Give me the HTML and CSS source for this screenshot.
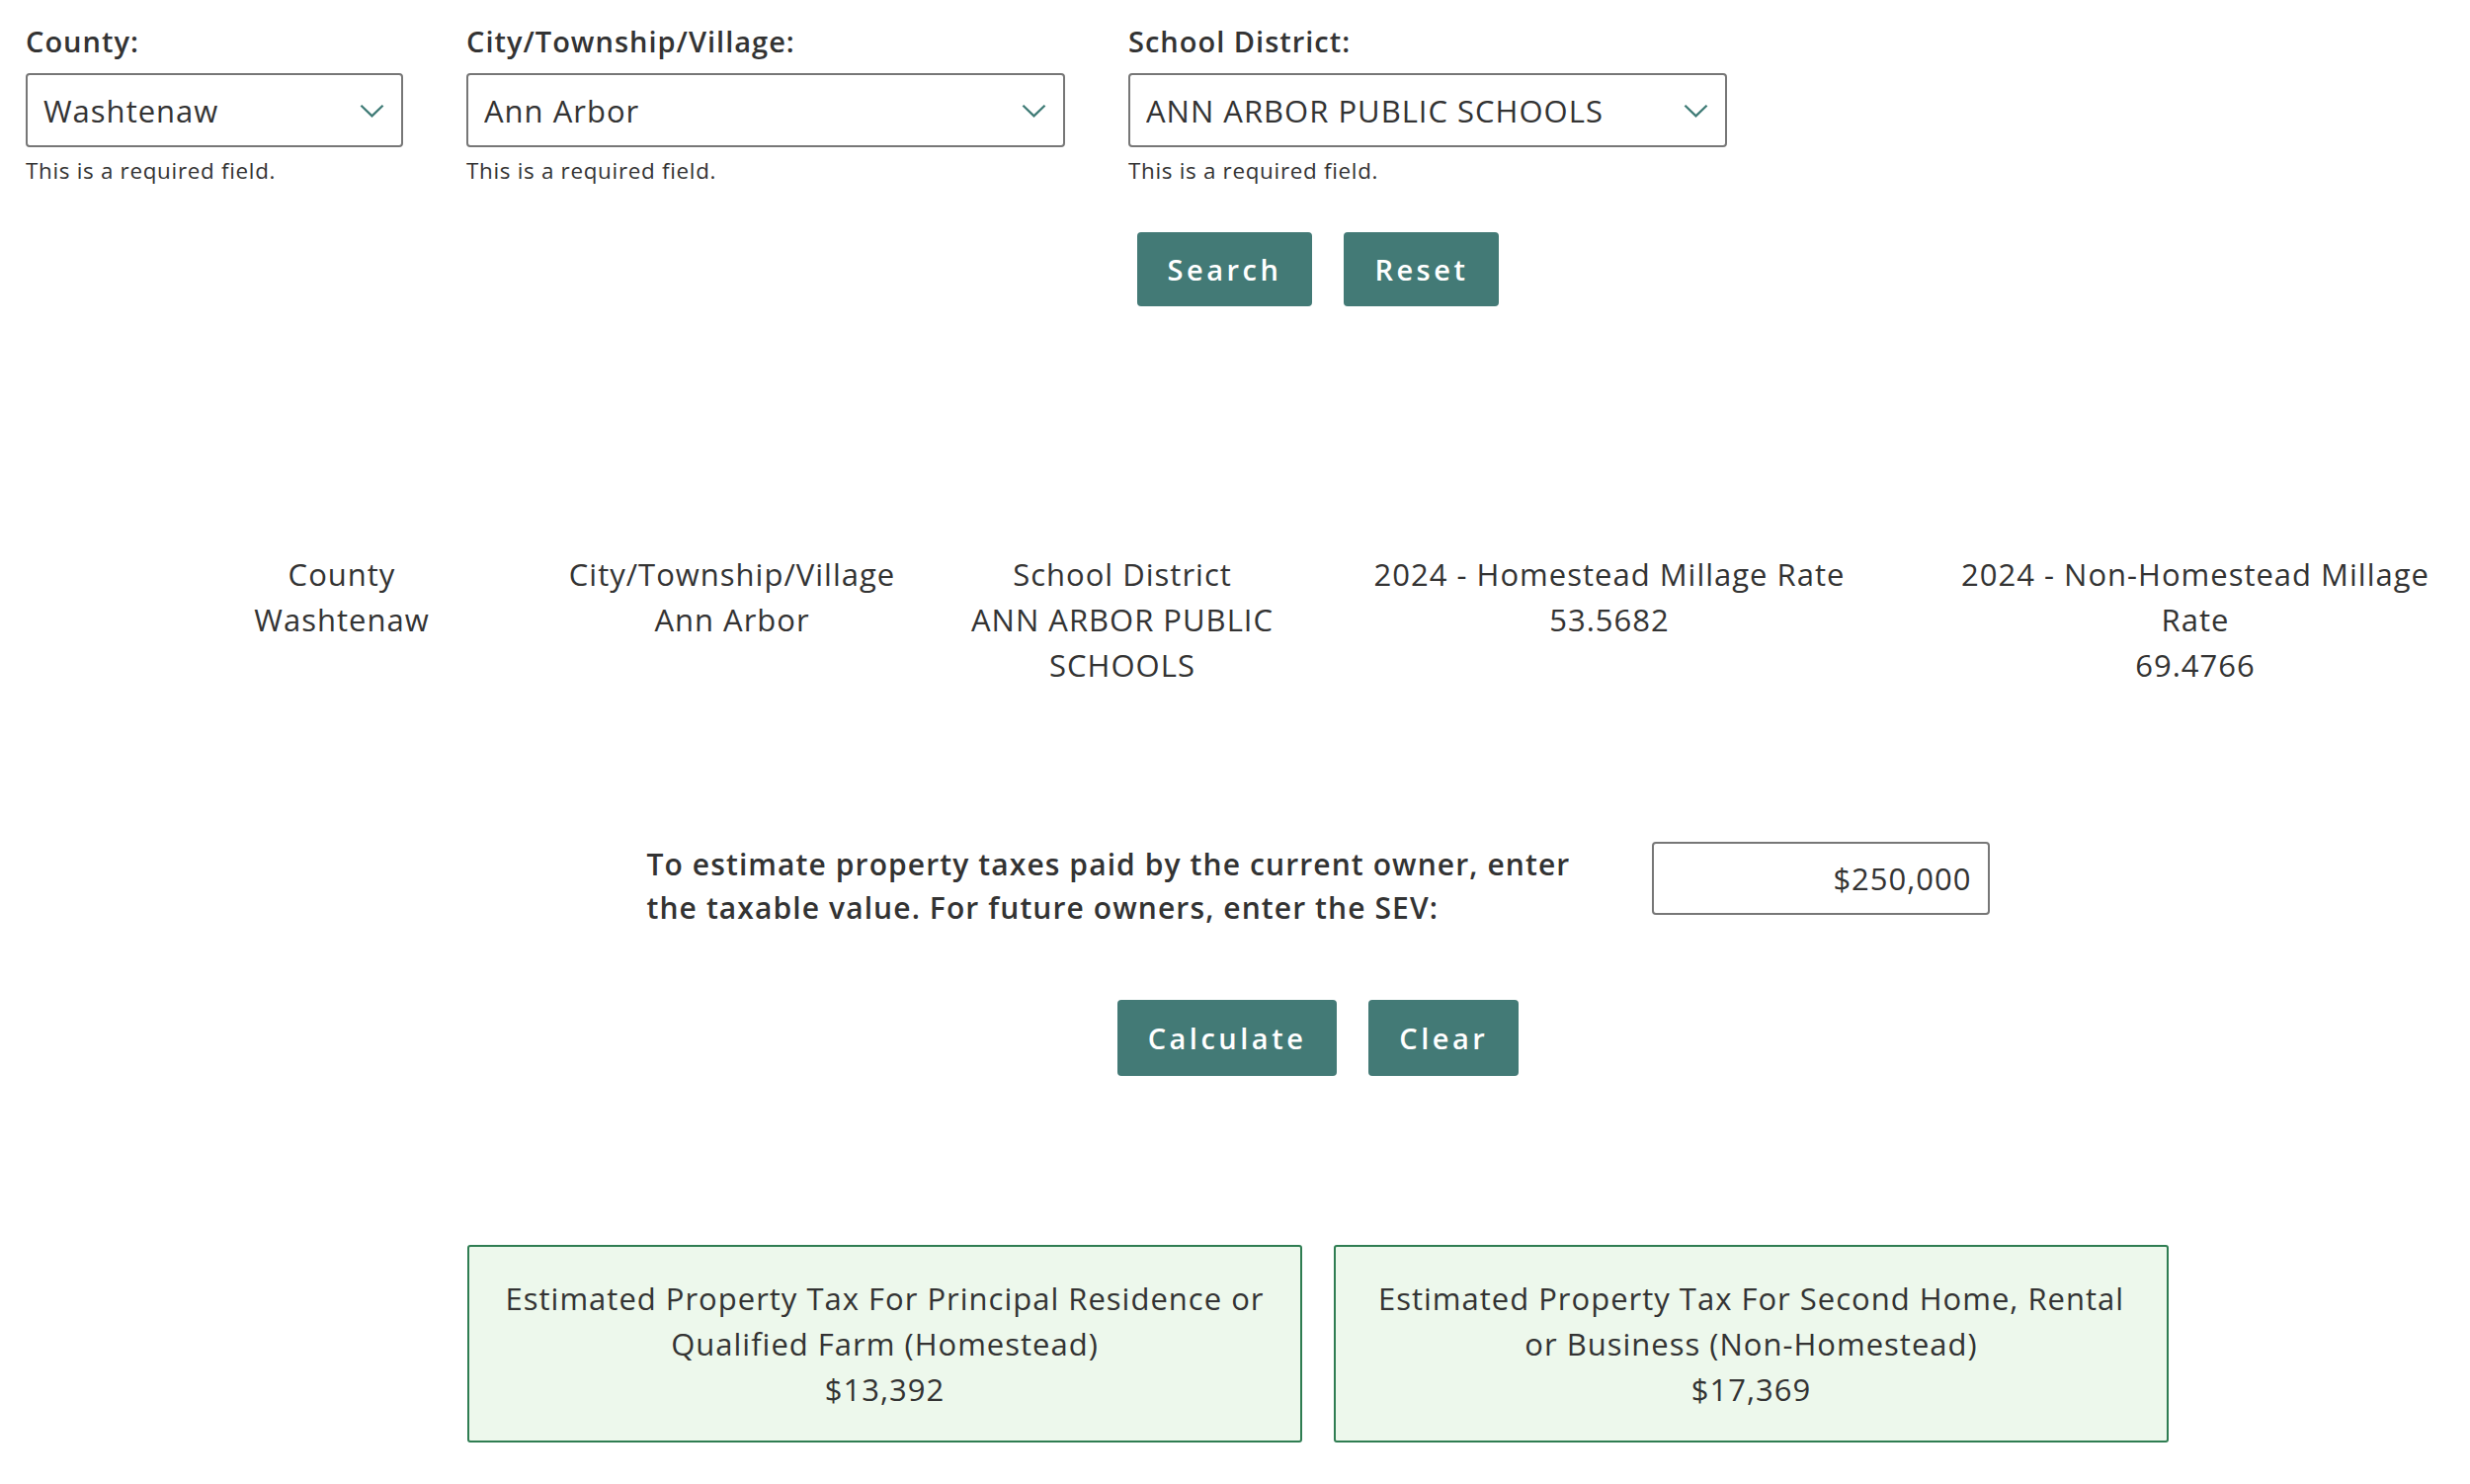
FILE: index.html
```html
<!DOCTYPE html>
<html lang="en">
<head>
    <meta charset="UTF-8">
    <meta name="viewport" content="width=device-width, initial-scale=1.0">
    <title>Millage Rate Calculator</title>
    <link rel="stylesheet" href="styles.css">
</head>
<body>
    <div class="page">
        <div class="filters">
            <div class="field field-county">
                <label class="field-label" for="county">County:</label>
                <div class="select-wrap">
                    <select id="county" class="select">
                        <option>Washtenaw</option>
                    </select>
                    <svg class="chevron" viewBox="0 0 26 14"><path d="M1.5 1.5 L13 12.5 L24.5 1.5"/></svg>
                </div>
                <p class="hint">This is a required field.</p>
            </div>
            <div class="field field-wide">
                <label class="field-label" for="city">City/Township/Village:</label>
                <div class="select-wrap">
                    <select id="city" class="select">
                        <option>Ann Arbor</option>
                    </select>
                    <svg class="chevron" viewBox="0 0 26 14"><path d="M1.5 1.5 L13 12.5 L24.5 1.5"/></svg>
                </div>
                <p class="hint">This is a required field.</p>
            </div>
            <div class="field field-wide">
                <label class="field-label" for="district">School District:</label>
                <div class="select-wrap">
                    <select id="district" class="select">
                        <option>ANN ARBOR PUBLIC SCHOOLS</option>
                    </select>
                    <svg class="chevron" viewBox="0 0 26 14"><path d="M1.5 1.5 L13 12.5 L24.5 1.5"/></svg>
                </div>
                <p class="hint">This is a required field.</p>
            </div>
        </div>

        <div class="actions centered">
            <button class="btn">Search</button>
            <button class="btn">Reset</button>
        </div>

        <div class="results">
            <div class="result-cell">
                <div>County</div>
                <div>Washtenaw</div>
            </div>
            <div class="result-cell">
                <div>City/Township/Village</div>
                <div>Ann Arbor</div>
            </div>
            <div class="result-cell">
                <div>School District</div>
                <div>ANN ARBOR PUBLIC SCHOOLS</div>
            </div>
            <div class="result-cell">
                <div>2024 - Homestead Millage Rate</div>
                <div>53.5682</div>
            </div>
            <div class="result-cell">
                <div>2024 - Non-Homestead Millage Rate</div>
                <div>69.4766</div>
            </div>
        </div>

        <div class="tax-row centered">
            <label class="tax-label" for="taxable">To estimate property taxes paid by the current owner, enter the taxable value. For future owners, enter the SEV:</label>
            <input id="taxable" class="tax-input" type="text" value="$250,000">
        </div>

        <div class="actions actions-calc centered">
            <button class="btn">Calculate</button>
            <button class="btn">Clear</button>
        </div>

        <div class="estimates centered">
            <div class="estimate-box">
                Estimated Property Tax For Principal Residence or Qualified Farm (Homestead)
                <div>$13,392</div>
            </div>
            <div class="estimate-box">
                Estimated Property Tax For Second Home, Rental or Business (Non-Homestead)
                <div>$17,369</div>
            </div>
        </div>
    </div>
</body>
</html>
```

FILE: styles.css
```css
* {
    margin: 0;
    padding: 0;
    box-sizing: border-box;
}

body {
    font-family: "Open Sans", Arial, sans-serif;
    font-size: 31px;
    letter-spacing: 1px;
    color: #333;
    background: #fff;
    overflow: hidden;
}

.page {
    margin-left: 26px;
    padding-top: 22px;
}

.centered {
    padding-left: 142px;
}

/* filters */
.filters {
    display: flex;
    gap: 64px;
}

.field-county {
    width: 382px;
}

.field-wide {
    width: 606px;
}

.field-label {
    display: block;
    font-size: 29px;
    font-weight: 600;
    line-height: 40px;
    margin-bottom: 12px;
}

.select-wrap {
    position: relative;
}

.select {
    display: block;
    width: 100%;
    height: 75px;
    padding: 0 60px 0 16px;
    font-family: inherit;
    font-size: 31px;
    letter-spacing: 1px;
    color: #333;
    background: #fff;
    border: 2px solid #777;
    border-radius: 4px;
    appearance: none;
    -webkit-appearance: none;
}

.chevron {
    position: absolute;
    right: 19px;
    top: 31px;
    width: 25px;
    height: 14px;
    fill: none;
    stroke: #3f7b76;
    stroke-width: 2.4;
}

.hint {
    font-size: 22.4px;
    letter-spacing: 0.7px;
    line-height: 32px;
    margin-top: 8px;
}

/* buttons */
.actions {
    display: flex;
    justify-content: center;
    gap: 32px;
    margin-top: 46px;
}

.btn {
    height: 75px;
    padding: 0 31px;
    font-family: inherit;
    font-size: 29px;
    font-weight: 600;
    letter-spacing: 3.5px;
    color: #fff;
    background: #437a76;
    border: none;
    border-radius: 4px;
    cursor: pointer;
}

.actions-calc {
    margin-top: 71px;
}

.actions-calc .btn {
    height: 77px;
}

/* summary row */
.results {
    display: grid;
    grid-template-columns: 370px 420px 370px 616px 555px;
    margin-left: 135px;
    margin-top: 248px;
}

.result-cell {
    padding: 0 20px;
    text-align: center;
    line-height: 46px;
}

.result-cell:last-child {
    padding: 0 20px 0 35px;
}

/* taxable value */
.tax-row {
    display: flex;
    justify-content: center;
    align-items: flex-start;
    gap: 57px;
    margin-top: 156px;
}

.tax-label {
    width: 960px;
    padding-top: 1px;
    font-size: 30px;
    font-weight: 600;
    letter-spacing: 1.1px;
    line-height: 44px;
}

.tax-input {
    width: 342px;
    height: 74px;
    padding: 0 16px;
    font-family: inherit;
    font-size: 31px;
    letter-spacing: 1px;
    color: #333;
    text-align: right;
    border: 2px solid #777;
    border-radius: 4px;
}

/* estimate boxes */
.estimates {
    display: flex;
    justify-content: center;
    gap: 32px;
    margin-top: 171px;
}

.estimate-box {
    width: 845px;
    padding: 29px 32px;
    text-align: center;
    line-height: 46px;
    background: #edf8ec;
    border: 2px solid #2f7d52;
    border-radius: 3px;
}
```
